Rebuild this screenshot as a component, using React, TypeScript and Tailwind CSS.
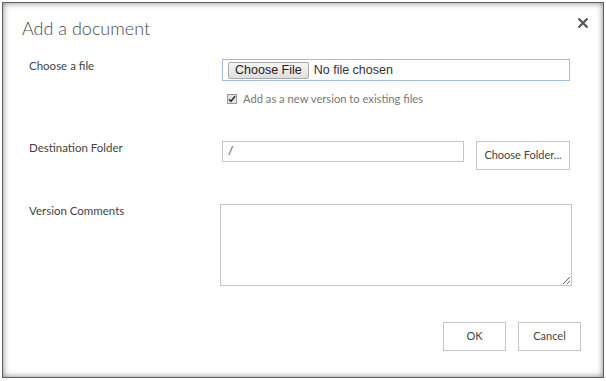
export default function App() {
  return (
    <div className="w-[606px] h-[381px] bg-white p-[2px] font-['Lato','Noto_Sans',sans-serif] text-[#444]">
      <div className="h-[376px] border border-[#5f5f5f] bg-white shadow-[inset_0_0_6px_rgba(0,0,0,0.5)] flex flex-col">
        <div className="flex items-start justify-between pl-[19px] pr-[14px] pt-[11px]">
          <h1 className="text-[18px] font-light leading-[28px] text-[#4a4a4a]">Add a document</h1>
          <button className="mt-[3px] text-[#555]">
            <svg width="12" height="12" viewBox="0 0 12 12">
              <path d="M1.5 1.5 L10.5 10.5 M10.5 1.5 L1.5 10.5" stroke="#555" strokeWidth="2.2" />
            </svg>
          </button>
        </div>

        <div className="grid grid-cols-[193px_1fr] pl-[26px] pr-[33px] mt-[17px]">
          <label className="text-[11.5px] leading-[14px]">Choose a file</label>
          <div>
            <div className="h-[22px] border border-[#9fbce4] flex items-center px-[5px] gap-[5px]">
              <span className="h-[17px] px-[6px] flex items-center border border-[#a9a9a9] rounded-[2px] bg-gradient-to-b from-[#f6f6f6] to-[#dedede] text-[12.5px] font-['Liberation_Sans',sans-serif] text-[#222]">
                Choose File
              </span>
              <span className="text-[12.5px] font-['Liberation_Sans',sans-serif] text-[#333]">No file chosen</span>
            </div>
            <div className="flex items-center gap-[6px] mt-[10px] pl-[5px]">
              <span className="w-[10px] h-[10px] border border-[#999] bg-[#e4e4e4] flex items-center justify-center">
                <svg width="8" height="8" viewBox="0 0 8 8">
                  <path d="M1 4.2 L3 6.3 L7 1.3" stroke="#333" strokeWidth="1.6" fill="none" />
                </svg>
              </span>
              <span className="text-[11.2px] text-[#777]">Add as a new version to existing files</span>
            </div>
          </div>

          <label className="text-[11.5px] leading-[14px] mt-[33px]">Destination Folder</label>
          <div className="flex items-start gap-[12px] mt-[33px]">
            <div className="w-[242px] h-[21px] border border-[#c6c6c6] flex items-center px-[5px] text-[12px] text-[#444]">/</div>
            <button className="w-[94px] h-[29px] border border-[#c6c6c6] text-[11px] text-[#444] bg-white">Choose Folder...</button>
          </div>

          <label className="text-[11.5px] leading-[14px] mt-[34px]">Version Comments</label>
          <div className="mt-[34px] -ml-[2px] -mr-[2px]">
            <textarea className="w-full h-[82px] border border-[#c6c6c6] block resize-y" />
          </div>
        </div>

        <div className="flex justify-end gap-[12px] pr-[22px] mt-[36px]">
          <button className="w-[63px] h-[29px] border border-[#c6c6c6] text-[11px] text-[#444] bg-white">OK</button>
          <button className="w-[63px] h-[29px] border border-[#c6c6c6] text-[11px] text-[#444] bg-white">Cancel</button>
        </div>
      </div>
    </div>
  );
}
